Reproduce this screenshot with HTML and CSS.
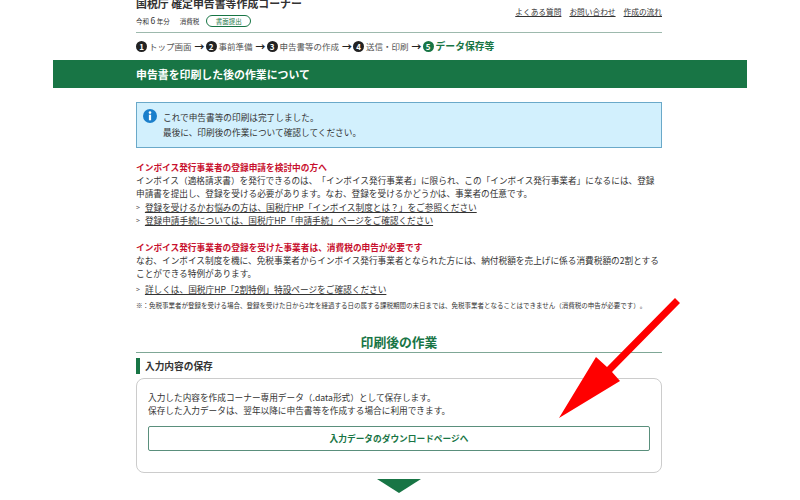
FILE: index.html
```html
<!DOCTYPE html>
<html>
<head>
    <title>申告書を印刷した後の作業について</title>
    <link rel="stylesheet" href="styles.css">
</head>
<body>
    <div class="container header">
        <div class="header-left">
            <div class="site-title">国税庁 確定申告書等作成コーナー</div>
            <div class="sub-row">
                <span>今和 <b class="year">6</b> 年分</span>
                <span class="tax">消費税</span>
                <span class="pill">書面提出</span>
            </div>
        </div>
        <div class="header-links">
            <a>よくある質問</a>
            <a>お問い合わせ</a>
            <a>作成の流れ</a>
        </div>
    </div>

    <div class="container steps">
        <span class="num">1</span><span class="step">トップ画面</span><span class="arr">→</span>
        <span class="num">2</span><span class="step">事前準備</span><span class="arr">→</span>
        <span class="num">3</span><span class="step">申告書等の作成</span><span class="arr">→</span>
        <span class="num">4</span><span class="step">送信・印刷</span><span class="arr">→</span>
        <span class="num current">5</span><span class="step current-text">データ保存等</span>
    </div>

    <div class="page-bar">
        <h1>申告書を印刷した後の作業について</h1>
    </div>

    <div class="container">
        <div class="info-box">
            <svg class="info-icon" width="14" height="14" viewBox="0 0 14 14">
                <circle cx="7" cy="7" r="7" fill="#1a7fcb"/>
                <circle cx="7" cy="3.6" r="1.3" fill="#fff"/>
                <rect x="5.9" y="5.7" width="2.2" height="5.6" fill="#fff"/>
            </svg>
            <div>
                <p>これで申告書等の印刷は完了しました。</p>
                <p>最後に、印刷後の作業について確認してください。</p>
            </div>
        </div>

        <div class="notice">
            <h2>インボイス発行事業者の登録申請を検討中の方へ</h2>
            <p>インボイス（適格請求書）を発行できるのは、「インボイス発行事業者」に限られ、この「インボイス発行事業者」になるには、登録申請書を提出し、登録を受ける必要があります。なお、登録を受けるかどうかは、事業者の任意です。</p>
            <div class="link-row"><i>&gt;</i><a>登録を受けるかお悩みの方は、国税庁HP「インボイス制度とは？」をご参照ください</a></div>
            <div class="link-row next"><i>&gt;</i><a>登録申請手続については、国税庁HP「申請手続」ページをご確認ください</a></div>
        </div>

        <div class="notice second">
            <h2>インボイス発行事業者の登録を受けた事業者は、消費税の申告が必要です</h2>
            <p>なお、インボイス制度を機に、免税事業者からインボイス発行事業者となられた方には、納付税額を売上げに係る消費税額の2割とすることができる特例があります。</p>
            <div class="link-row single"><i>&gt;</i><a>詳しくは、国税庁HP「2割特例」特設ページをご確認ください</a></div>
            <p class="small-note">※：免税事業者が登録を受ける場合、登録を受けた日から2年を経過する日の属する課税期間の末日までは、免税事業者となることはできません（消費税の申告が必要です）。</p>
        </div>

        <h2 class="section-title">印刷後の作業</h2>
        <h3 class="sub-title">入力内容の保存</h3>

        <div class="save-box">
            <p>入力した内容を作成コーナー専用データ（.data形式）として保存します。</p>
            <p>保存した入力データは、翌年以降に申告書等を作成する場合に利用できます。</p>
            <div class="save-btn">入力データのダウンロードページへ</div>
        </div>

        <div class="down-mark"></div>
    </div>

    <svg class="red-arrow" width="800" height="500" viewBox="0 0 800 500">
        <polygon fill="#f00" points="559,418 596,357 607,367 675,298 680,303 612,372 620,381"/>
    </svg>
</body>
</html>
```

FILE: styles.css
```css
html, body {
    height: 500px;
    overflow: hidden;
}

body {
    margin: 0;
    font-family: "Noto Sans CJK JP", "Noto Sans", sans-serif;
    font-size: 8.67px;
    line-height: 13px;
    color: #333;
    background-color: #fff;
    text-spacing-trim: space-all;
}

p, h1, h2, h3 {
    margin: 0;
}

.container {
    width: 526px;
    margin-left: 136px;
}

/* ヘッダー */
.header {
    display: flex;
    justify-content: space-between;
    height: 36px;
    margin-top: -4px;
    border-bottom: 1px solid #9db9ad;
}

.site-title {
    font-size: 10.9px;
    font-weight: bold;
    line-height: 14px;
}

.sub-row {
    display: flex;
    align-items: center;
    margin-top: 4px;
    font-size: 6.5px;
    line-height: 12px;
}

.year {
    font-size: 8.5px;
    font-weight: normal;
}

.tax {
    margin-left: 10px;
}

.pill {
    width: 43px;
    height: 10px;
    margin-left: 7px;
    border: 1px solid #187545;
    border-radius: 6px;
    color: #187545;
    line-height: 10px;
    text-align: center;
}

.header-links {
    display: flex;
    gap: 8px;
    padding-top: 9px;
    font-size: 7.7px;
}

.header-links a,
.link-row a {
    text-decoration: underline;
}

/* ステップ */
.steps {
    display: flex;
    align-items: center;
    height: 27px;
    font-size: 8.5px;
    color: #555;
}

.num {
    width: 11px;
    height: 11px;
    border-radius: 50%;
    background-color: #222;
    color: #fff;
    font-size: 8px;
    font-weight: bold;
    line-height: 11px;
    text-align: center;
    margin-right: 2px;
}

.num.current {
    background-color: #187545;
}

.current-text {
    color: #187545;
    font-size: 9.8px;
    font-weight: bold;
}

.arr {
    margin: 0 1px 0 3px;
    color: #222;
    font-size: 10px;
    font-weight: bold;
}

/* 見出しバー */
.page-bar {
    width: 694px;
    height: 28px;
    margin: 0 auto;
    background-color: #187545;
}

.page-bar h1 {
    width: 526px;
    margin-left: 83px;
    color: #fff;
    font-size: 10.9px;
    font-weight: bold;
    line-height: 28px;
}

/* お知らせ */
.info-box {
    display: flex;
    gap: 6px;
    height: 46px;
    box-sizing: border-box;
    margin-top: 14px;
    padding: 7px 6px;
    border: 1px solid #6aa9c9;
    background-color: #d2f0fd;
    line-height: 15px;
}

.info-icon {
    flex: none;
    margin-top: -1px;
}

.notice {
    margin-top: 13px;
}

.notice.second {
    margin-top: 14px;
}

.notice h2 {
    color: #c8102e;
    font-size: 8.7px;
    font-weight: bold;
    line-height: 13px;
}

.link-row {
    display: flex;
    gap: 5px;
    margin-top: 1px;
}

.link-row.next {
    margin-top: 0;
}

.link-row.single {
    margin-top: 3px;
}

.link-row i {
    color: #555;
    font-size: 7px;
    font-style: normal;
}

.small-note {
    margin-top: 3px;
    font-size: 6.5px;
}

/* 印刷後の作業 */
.section-title {
    height: 21px;
    margin-top: 19px;
    border-bottom: 1px solid #7fa796;
    color: #187545;
    font-size: 12.8px;
    font-weight: bold;
    line-height: 21px;
    text-align: center;
}

.sub-title {
    height: 16px;
    margin-top: 5px;
    padding-left: 5px;
    border-left: 4px solid #187545;
    font-size: 9.7px;
    font-weight: bold;
    line-height: 16px;
}

.save-box {
    height: 95px;
    box-sizing: border-box;
    margin-top: 4px;
    padding: 12px 11px 0;
    border: 1px solid #ccc;
    border-radius: 8px;
}

.save-btn {
    height: 25px;
    box-sizing: border-box;
    margin-top: 9px;
    border: 1px solid #5a8f7c;
    border-radius: 2px;
    color: #187545;
    font-weight: bold;
    font-size: 8.7px;
    line-height: 23px;
    text-align: center;
}

.down-mark {
    width: 0;
    height: 0;
    margin: 6px auto 0;
    border-top: 14px solid #187545;
    border-left: 22px solid transparent;
    border-right: 22px solid transparent;
}

/* 赤い矢印 */
.red-arrow {
    position: absolute;
    left: 0;
    top: 0;
}
```
